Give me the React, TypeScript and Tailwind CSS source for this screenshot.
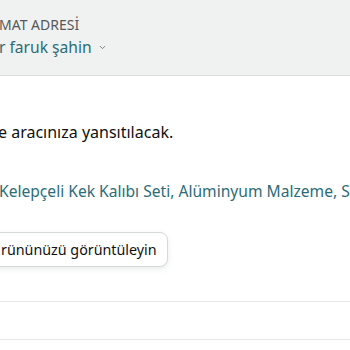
import * as React from "react";
import { ChevronDown } from "lucide-react";

export default function App() {
  return (
    <div className="w-[350px] h-[350px] overflow-hidden bg-white" style={{ fontFamily: '"Noto Sans", Arial, sans-serif' }}>
      <div className="h-[76px] bg-[#f0f1f1] border-b border-[#d9dcdc] pt-[17px]">
        <div className="-ml-[1px] text-[14px] leading-[16px] text-[#565959] whitespace-nowrap">MAT ADRESİ</div>
        <div className="mt-[3px] -ml-[1px] flex items-center gap-[6px] whitespace-nowrap">
          <span className="text-[15.6px] leading-[22px] text-[#2b6c79]">r faruk şahin</span>
          <ChevronDown className="w-[9px] h-[9px] text-[#565959] mt-[1px]" strokeWidth={2} />
        </div>
      </div>

      <div className="pt-[46px] -ml-[2px] text-[16px] leading-[20px] text-[#0f1111] whitespace-nowrap">
        e aracınıza yansıtılacak.
      </div>

      <div className="mt-[39px] -ml-[1px] text-[15.6px] leading-[20px] text-[#2b6c79] whitespace-nowrap">
        Kelepçeli Kek Kalıbı Seti, Alüminyum Malzeme, Siyah
      </div>

      <div className="mt-[31px] -ml-[14px] inline-flex h-[35px] items-center pl-[14px] pr-[10px] bg-white border border-[#d5d9d9] rounded-[8px] shadow-[0_2px_5px_rgba(213,217,217,0.5)] text-[14.3px] text-[#0f1111] whitespace-nowrap">
        rününüzü görüntüleyin
      </div>

      <div className="mt-[34px] border-t border-[#e7e7e7]" />
      <div className="mt-[37px] border-t border-[#e7e7e7]" />
    </div>
  );
}
